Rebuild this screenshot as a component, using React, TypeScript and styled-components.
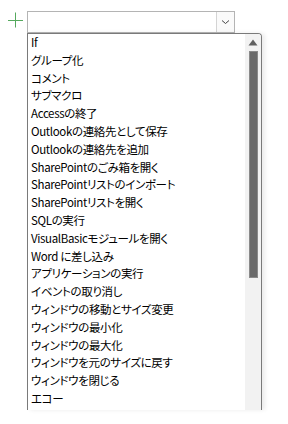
import React from 'react';
import styled, { createGlobalStyle } from 'styled-components';

const items = [
    'If',
    'グループ化',
    'コメント',
    'サブマクロ',
    'Accessの終了',
    'Outlookの連絡先として保存',
    'Outlookの連絡先を追加',
    'SharePointのごみ箱を開く',
    'SharePointリストのインポート',
    'SharePointリストを開く',
    'SQLの実行',
    'VisualBasicモジュールを開く',
    'Word に差し込み',
    'アプリケーションの実行',
    'イベントの取り消し',
    'ウィンドウの移動とサイズ変更',
    'ウィンドウの最小化',
    'ウィンドウの最大化',
    'ウィンドウを元のサイズに戻す',
    'ウィンドウを閉じる',
    'エコー'
];

export default function App() {
    return (
        <>
            <GlobalStyle />
            <Page>
                <AddIcon viewBox='0 0 16 16'>
                    <path d='M7.5 0.5V15.5M0 8.5H15' stroke='#56a95e' strokeWidth='1' fill='none' />
                </AddIcon>
                <Picker>
                    <Combo>
                        <ComboInput />
                        <ComboButton>
                            <svg width='9' height='6' viewBox='0 0 9 6'>
                                <path d='M1 1.5L4.5 4.5L8 1.5' stroke='#444' strokeWidth='1' fill='none' />
                            </svg>
                        </ComboButton>
                    </Combo>
                    <ListBox>
                        <Options>
                            {items.map((item) => (
                                <Option key={item}>{item}</Option>
                            ))}
                        </Options>
                        <ScrollTrack>
                            <UpArrow viewBox='0 0 10 7'>
                                <path d='M5 0.5L9.5 6.5H0.5Z' fill='#606060' />
                            </UpArrow>
                            <Thumb />
                        </ScrollTrack>
                    </ListBox>
                </Picker>
            </Page>
        </>
    );
}

const GlobalStyle = createGlobalStyle`
    body {
        margin: 0;
        background: #ffffff;
        font-family: 'Noto Sans CJK JP', 'Noto Sans', sans-serif;
    }
`;

const Page = styled.div`
    display: flex;
    align-items: flex-start;
    padding: 11px 0 0 8px;
    width: 288px;
    height: 424px;
    box-sizing: border-box;
    overflow: hidden;
`;

const AddIcon = styled.svg`
    width: 16px;
    height: 16px;
    margin-top: 1px;
    margin-right: 3px;
`;

const Picker = styled.div`
    display: flex;
    flex-direction: column;
`;

const Combo = styled.div`
    display: flex;
    width: 208px;
    height: 22px;
    box-sizing: border-box;
    border: 1px solid #b4b4b4;
    background: #ffffff;
`;

const ComboInput = styled.div`
    flex: 1;
`;

const ComboButton = styled.div`
    display: flex;
    align-items: center;
    justify-content: center;
    width: 17px;
    margin: 0 0 0 auto;
    border-left: 1px solid #d4d4d4;
    background: #fafafa;
`;

const ListBox = styled.div`
    display: flex;
    width: 235px;
    height: 377px;
    box-sizing: border-box;
    border: 1px solid #7a7a7a;
    border-bottom: none;
    border-top-right-radius: 4px;
    box-shadow: 3px 0 4px rgba(0, 0, 0, 0.08);
    background: #ffffff;
    overflow: hidden;
`;

const Options = styled.div`
    flex: 1;
    padding: 0 0 0 3px;
`;

const Option = styled.div`
    height: 17.8px;
    line-height: 17.8px;
    font-size: 11.5px;
    letter-spacing: -0.35px;
    color: #000000;
    white-space: nowrap;
    font-feature-settings: 'palt';
`;

const ScrollTrack = styled.div`
    display: flex;
    flex-direction: column;
    align-items: center;
    width: 16px;
    background: #f2f2f2;
`;

const UpArrow = styled.svg`
    width: 10px;
    height: 7px;
    margin-top: 5px;
`;

const Thumb = styled.div`
    width: 9px;
    height: 227px;
    margin-top: 5px;
    background: #6a6a6a;
    border: 1px solid #8a8a8a;
    box-sizing: border-box;
`;
